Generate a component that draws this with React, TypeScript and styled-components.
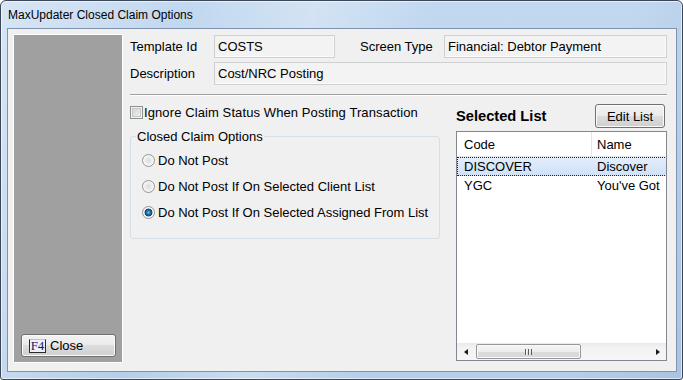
import React from 'react';
import styled, { createGlobalStyle } from 'styled-components';

const GlobalStyle = createGlobalStyle`
  html, body {
    margin: 0;
    padding: 0;
    background: #ffffff;
  }
  body {
    width: 683px;
    height: 380px;
    overflow: hidden;
    font-family: "Liberation Sans", Arial, sans-serif;
    font-size: 13px;
    color: #000;
  }
  * {
    box-sizing: border-box;
  }
`;

const Window = styled.div`
  width: 683px;
  height: 380px;
  display: flex;
  flex-direction: column;
  padding: 0 5px 7px 6px;
  border: 1px solid #3b4756;
  border-radius: 6px 6px 3px 3px;
  background:
    linear-gradient(100deg, rgba(255, 255, 255, 0.35) 0%, rgba(255, 255, 255, 0) 25%, rgba(255, 255, 255, 0.28) 42%, rgba(255, 255, 255, 0) 58%, rgba(255, 255, 255, 0) 85%, rgba(120, 150, 190, 0.2) 100%),
    linear-gradient(180deg, #c2d8f0 0%, #b5ceea 100%);
  box-shadow: inset 0 0 0 1px rgba(255, 255, 255, 0.6);
`;

const TitleBar = styled.div`
  height: 27px;
  display: flex;
  align-items: center;
  padding-left: 1px;
  font-size: 12px;
  color: #000;
`;

const Client = styled.div`
  flex: 1;
  display: flex;
  gap: 7px;
  padding: 5px 9px 8px 5px;
  border: 1px solid #7f93ad;
  background: #f0f0f0;
  min-height: 0;
`;

const SidePanel = styled.div`
  width: 110px;
  display: flex;
  flex-direction: column;
  justify-content: flex-end;
  padding: 0 6px 5px 7px;
  border: 1px solid #ffffff;
  background: #a0a0a0;
`;

const WinButton = styled.button<{ $w: number; $align?: string }>`
  width: ${(p) => p.$w}px;
  height: ${(p) => (p.$align === 'start' ? 23 : 24)}px;
  display: flex;
  align-items: center;
  justify-content: ${(p) => (p.$align === 'start' ? 'flex-start' : 'center')};
  gap: 4px;
  padding: 0 0 0 ${(p) => (p.$align === 'start' ? 7 : 0)}px;
  border: 1px solid #707070;
  border-radius: 3px;
  background: linear-gradient(180deg, #f2f2f2 0%, #ebebeb 50%, #dddddd 50%, #cfcfcf 100%);
  box-shadow: inset 0 0 0 1px #fbfbfb;
  font-family: "Liberation Sans", Arial, sans-serif;
  font-size: 13px;
  color: #000;
`;

const KeyCap = styled.span`
  width: 17px;
  height: 14px;
  display: flex;
  align-items: center;
  justify-content: center;
  border: 1px solid #2a2a2a;
  border-top-color: #bfc3cc;
  background: #eef0f6;
  font-family: "Liberation Serif", "Times New Roman", serif;
  font-size: 13px;
  color: #16166a;
  line-height: 1;
`;

const Main = styled.div`
  flex: 1;
  display: flex;
  flex-direction: column;
  padding-top: 1px;
  min-width: 0;
`;

const HeaderGrid = styled.div`
  display: grid;
  grid-template-columns: 84px 121px 25px 84px 1fr;
  grid-template-rows: 23px 23px;
  row-gap: 4px;
  align-items: center;
`;

const Label = styled.div<{ $col: number; $row: number }>`
  grid-column: ${(p) => p.$col};
  grid-row: ${(p) => p.$row};
  white-space: nowrap;
`;

const Field = styled.div<{ $col: string; $row: number }>`
  grid-column: ${(p) => p.$col};
  grid-row: ${(p) => p.$row};
  height: 23px;
  display: flex;
  align-items: center;
  padding-left: 3px;
  border: 1px solid #cfd0d2;
  background: #f3f3f3;
  box-shadow: inset -1px -1px 0 #fbfbfb;
  white-space: nowrap;
  overflow: hidden;
`;

const Separator = styled.div`
  margin-top: 9px;
  height: 2px;
  border-top: 1px solid #a0a0a0;
  border-bottom: 1px solid #ffffff;
`;

const Lower = styled.div`
  flex: 1;
  display: flex;
  gap: 16px;
  margin-top: 8px;
  min-height: 0;
`;

const Options = styled.div`
  width: 310px;
  display: flex;
  flex-direction: column;
`;

const CheckRow = styled.label`
  height: 14px;
  display: flex;
  align-items: center;
  gap: 1px;
  margin-top: 1px;
  white-space: nowrap;
  letter-spacing: 0.1px;
`;

const CheckBox = styled.span`
  width: 13px;
  height: 13px;
  border: 1px solid #8e8f8f;
  background: linear-gradient(135deg, #cfd1d4 0%, #f3f3f4 100%);
  box-shadow: inset 0 0 0 1px #f4f4f4, inset 0 0 0 2px #c3c6ca;
`;

const GroupBox = styled.fieldset`
  margin: 10px 0 0 0;
  padding: 3px 0 13px 0;
  border: 1px solid #d5dfe5;
  border-radius: 3px;
  min-width: 0;
`;

const Legend = styled.legend`
  margin-left: 5px;
  padding: 0 1px;
  line-height: 15px;
`;

const RadioList = styled.div`
  display: flex;
  flex-direction: column;
  padding-left: 11px;
`;

const RadioRow = styled.label`
  height: 26px;
  display: flex;
  align-items: center;
  gap: 3px;
  white-space: nowrap;
`;

const RadioDot = styled.span<{ $on?: boolean }>`
  width: 13px;
  height: 13px;
  border-radius: 50%;
  border: 1px solid #959697;
  background: ${(p) =>
    p.$on
      ? 'radial-gradient(circle, #74b6e6 0%, #1d6fa8 28%, #0c3d66 48%, #e9e9e9 54%, #f6f6f6 100%)'
      : 'radial-gradient(circle, #d9dadc 0%, #eeeeee 45%, #f7f7f7 100%)'};
  box-shadow: inset 0 0 0 1px #f6f6f6;
`;

const ListPane = styled.div`
  flex: 1;
  display: flex;
  flex-direction: column;
  padding-bottom: 2px;
  min-width: 0;
`;

const ListTop = styled.div`
  height: 24px;
  display: flex;
  align-items: flex-end;
  justify-content: space-between;
  padding-right: 2px;
`;

const ListTitle = styled.div`
  font-weight: bold;
  font-size: 14.67px;
  line-height: 17px;
  padding-bottom: 3px;
`;

const ListView = styled.div`
  flex: 1;
  display: flex;
  flex-direction: column;
  margin-top: 3px;
  border: 1px solid #828790;
  background: #ffffff;
  overflow: hidden;
  min-height: 0;
`;

const ColHeader = styled.div`
  height: 25px;
  display: flex;
  border-bottom: 1px solid #e5e5e5;
  flex-shrink: 0;
`;

const HeadCell = styled.div<{ $w: number; $pad: number; $sep?: boolean }>`
  width: ${(p) => p.$w}px;
  flex-shrink: 0;
  display: flex;
  align-items: center;
  padding-left: ${(p) => p.$pad}px;
  border-right: ${(p) => (p.$sep ? '1px solid #e3e4e6' : 'none')};
  white-space: nowrap;
`;

const Row = styled.div<{ $selected?: boolean }>`
  height: 19px;
  width: 330px;
  display: flex;
  flex-shrink: 0;
  background: ${(p) => (p.$selected ? 'linear-gradient(180deg, #e3eefc 0%, #cfe1f8 100%)' : 'transparent')};
  outline: ${(p) => (p.$selected ? '1px dotted #222' : 'none')};
  outline-offset: -1px;
`;

const Cell = styled.div<{ $w: number; $pad: number }>`
  width: ${(p) => p.$w}px;
  flex-shrink: 0;
  display: flex;
  align-items: center;
  padding-left: ${(p) => p.$pad}px;
  white-space: nowrap;
`;

const Fill = styled.div`
  flex: 1;
`;

const HScroll = styled.div`
  height: 17px;
  display: flex;
  align-items: center;
  flex-shrink: 0;
  background: linear-gradient(180deg, #e9e9e9 0%, #f3f3f3 30%, #f6f6f6 100%);
`;

const ArrowBtn = styled.div<{ $dir: 'left' | 'right' }>`
  width: 17px;
  height: 17px;
  display: flex;
  align-items: center;
  justify-content: center;
  &::before {
    content: '';
    width: 0;
    height: 0;
    border-top: 3.5px solid transparent;
    border-bottom: 3.5px solid transparent;
    ${(p) => (p.$dir === 'left' ? 'border-right: 4px solid #1a1a1a;' : 'border-left: 4px solid #1a1a1a;')}
  }
`;

const Thumb = styled.div`
  width: 105px;
  height: 15px;
  margin-left: 2px;
  display: flex;
  align-items: center;
  justify-content: center;
  border: 1px solid #979797;
  border-radius: 2px;
  background: linear-gradient(180deg, #f5f5f5 0%, #ececec 50%, #dcdcdc 50%, #d8d8d8 100%);
  box-shadow: inset 0 0 0 1px #fafafa;
`;

const Grip = styled.span`
  width: 7px;
  height: 6px;
  background: repeating-linear-gradient(90deg, #5a5a5a 0 1px, #f4f4f4 1px 2px, transparent 2px 3px);
`;

const Track = styled.div`
  flex: 1;
`;

const rows = [
  { code: 'DISCOVER', name: 'Discover', selected: true },
  { code: 'YGC', name: "You've Got" },
];

const App: React.FC = () => {
  return (
    <>
      <GlobalStyle />
      <Window>
        <TitleBar>MaxUpdater Closed Claim Options</TitleBar>
        <Client>
          <SidePanel>
            <WinButton $w={95} $align="start">
              <KeyCap>F4</KeyCap>
              Close
            </WinButton>
          </SidePanel>

          <Main>
            <HeaderGrid>
              <Label $col={1} $row={1}>Template Id</Label>
              <Field $col="2" $row={1}>COSTS</Field>
              <Label $col={4} $row={1}>Screen Type</Label>
              <Field $col="5" $row={1}>Financial: Debtor Payment</Field>
              <Label $col={1} $row={2}>Description</Label>
              <Field $col="2 / -1" $row={2}>Cost/NRC Posting</Field>
            </HeaderGrid>

            <Separator />

            <Lower>
              <Options>
                <CheckRow>
                  <CheckBox />
                  Ignore Claim Status When Posting Transaction
                </CheckRow>
                <GroupBox>
                  <Legend>Closed Claim Options</Legend>
                  <RadioList>
                    <RadioRow>
                      <RadioDot />
                      Do Not Post
                    </RadioRow>
                    <RadioRow>
                      <RadioDot />
                      Do Not Post If On Selected Client List
                    </RadioRow>
                    <RadioRow>
                      <RadioDot $on />
                      Do Not Post If On Selected Assigned From List
                    </RadioRow>
                  </RadioList>
                </GroupBox>
              </Options>

              <ListPane>
                <ListTop>
                  <ListTitle>Selected List</ListTitle>
                  <WinButton $w={70}>Edit List</WinButton>
                </ListTop>
                <ListView>
                  <ColHeader>
                    <HeadCell $w={135} $pad={7} $sep>Code</HeadCell>
                    <HeadCell $w={160} $pad={5}>Name</HeadCell>
                  </ColHeader>
                  {rows.map((r) => (
                    <Row key={r.code} $selected={r.selected}>
                      <Cell $w={135} $pad={7}>{r.code}</Cell>
                      <Cell $w={160} $pad={5}>{r.name}</Cell>
                    </Row>
                  ))}
                  <Fill />
                  <HScroll>
                    <ArrowBtn $dir="left" />
                    <Thumb>
                      <Grip />
                    </Thumb>
                    <Track />
                    <ArrowBtn $dir="right" />
                  </HScroll>
                </ListView>
              </ListPane>
            </Lower>
          </Main>
        </Client>
      </Window>
    </>
  );
};

export default App;
